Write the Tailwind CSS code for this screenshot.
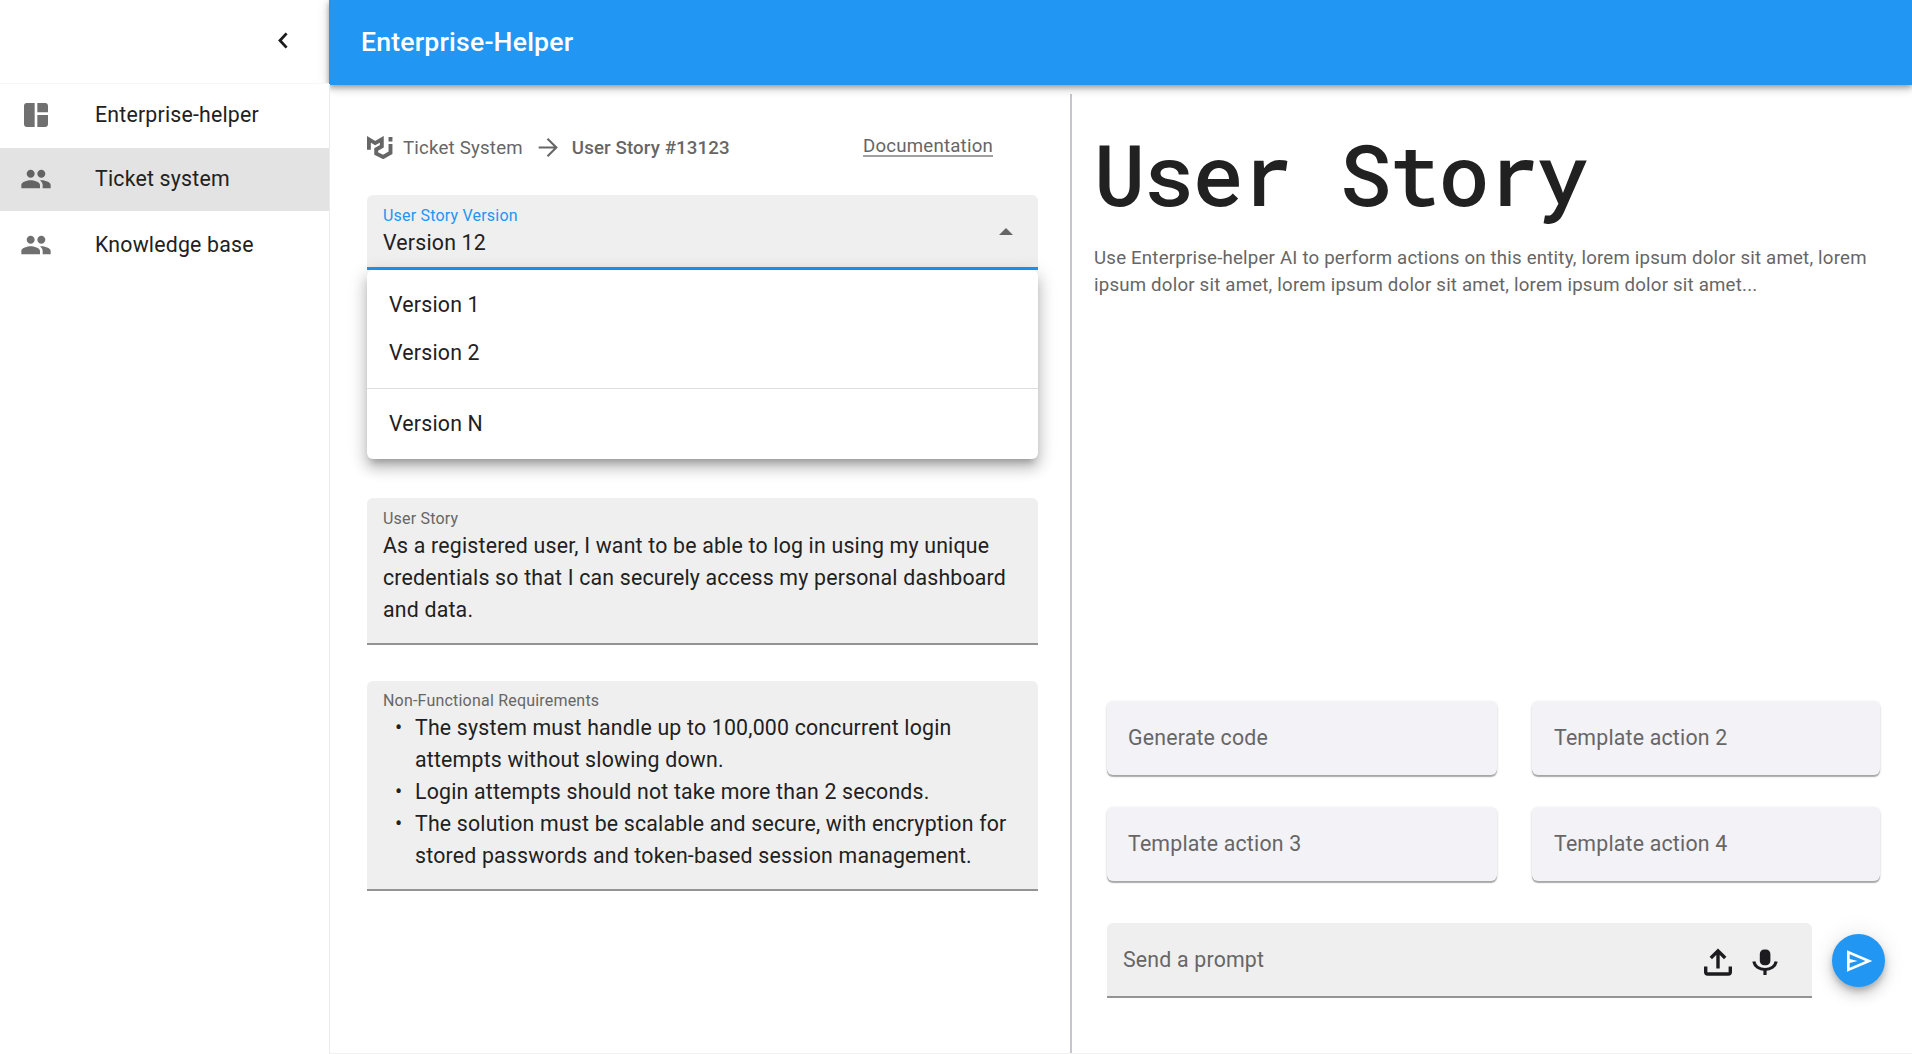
<!DOCTYPE html>
<html lang="en">
<head>
<meta charset="utf-8">
<title>Enterprise-Helper</title>
<script src="https://cdn.jsdelivr.net/npm/@tailwindcss/browser@4"></script>
</head>
<body class="flex h-[1054px] w-[1912px] overflow-hidden bg-white font-['Roboto',sans-serif] text-[21.3px] leading-8 tracking-[0.2px] text-[#212121]">
  <nav class="z-20 flex w-[329px] shrink-0 flex-col">
    <div class="flex h-[84px] shrink-0 items-center justify-end border-b border-[#f7f7f7] pr-[34px]">
      <svg class="mt-[-3px] size-6" viewBox="0 0 24 24" fill="none" stroke="#1c1c1c" stroke-width="2.8"><path d="M15.6 5.4 9 12.5l6.600 7.1"/></svg>
    </div>
    <div class="mr-[-1px] flex grow flex-col border-r border-[#ebebeb] bg-white">
      <a class="flex h-16 items-center pb-0.5 pl-5"><svg class="mr-[43px] size-8 fill-[#707070]" viewBox="0 0 24 24"><path d="M11 21H5c-1.100 0-2-.9-2-2V5c0-1.100.9-2 2-2h6v18zm2 0h6c1.100 0 2-.9 2-2v-7h-8v9zm8-11V5c0-1.100-.9-2-2-2h-6v7h8z"/></svg>Enterprise-helper</a>
      <a class="flex h-[63px] items-center bg-[#e3e3e3] pb-px pl-5"><svg class="mr-[43px] size-8 fill-[#636363]" viewBox="0 0 24 24"><path d="M16 11c1.660 0 2.990-1.340 2.990-3S17.660 5 16 5c-1.660 0-3 1.340-3 3s1.340 3 3 3zm-8 0c1.660 0 2.990-1.340 2.990-3S9.660 5 8 5C6.340 5 5 6.340 5 8s1.340 3 3 3zm0 2c-2.330 0-7 1.170-7 3.500V19h14v-2.500c0-2.330-4.670-3.500-7-3.500zm8 0c-.29 0-.62.02-.97.05 1.160.84 1.970 1.970 1.970 3.450V19h6v-2.500c0-2.330-4.670-3.500-7-3.500z"/></svg>Ticket system</a>
      <a class="mt-0.5 flex h-16 items-center pl-5"><svg class="mr-[43px] size-8 fill-[#707070]" viewBox="0 0 24 24"><path d="M16 11c1.660 0 2.990-1.340 2.990-3S17.660 5 16 5c-1.660 0-3 1.340-3 3s1.340 3 3 3zm-8 0c1.660 0 2.990-1.340 2.990-3S9.660 5 8 5C6.340 5 5 6.340 5 8s1.340 3 3 3zm0 2c-2.330 0-7 1.170-7 3.500V19h14v-2.500c0-2.330-4.670-3.500-7-3.500zm8 0c-.29 0-.62.02-.97.05 1.160.84 1.970 1.970 1.970 3.450V19h6v-2.500c0-2.330-4.670-3.500-7-3.500z"/></svg>Knowledge base</a>
    </div>
  </nav>

  <div class="flex grow flex-col">
    <header class="z-10 flex h-[85px] shrink-0 items-center bg-[#2196f3] pb-px pl-8 text-[26.6px] font-medium text-white shadow-[0_2px_5px_rgba(0,0,0,0.25),0_5px_7px_rgba(0,0,0,0.12),0_1px_13px_rgba(0,0,0,0.12)]">Enterprise-Helper</header>
    <div class="flex grow border-b border-[#f1f1f1]">
      <main class="mt-[9px] w-[743px] shrink-0 border-r-2 border-[#c7c6cc] pl-[38px]">
        <div class="flex h-[101px] items-center pt-1.5 text-[18.67px] text-[#666]">
          <svg class="mr-2.5 h-[23px] w-[26px]" viewBox="0 0 26 23" fill="none" stroke="#666" stroke-width="3.900"><path d="M1.900 13.800V3.400L8.200 7.100 14.800 3.300V10.300L9.200 13.500V17.600L16.200 21 23.500 16.800V8M23.500 0.900V5.600"/></svg>
          <span>Ticket System</span>
          <svg class="ml-3 mr-3 size-[25px]" viewBox="0 0 24 24" fill="none" stroke="#666" stroke-width="2"><path d="M3.500 12h16M12 3.500l8.500 8.500-8.500 8.500"/></svg>
          <span class="font-medium tracking-[0.13px]">User Story #13123</span>
          <a class="ml-auto mr-[77px] mt-[-3px] underline decoration-[#a0a0a0] decoration-2 underline-offset-[3px]">Documentation</a>
        </div>
        <div class="relative w-[671px]">
          <div class="flex h-[75px] items-center justify-between rounded-t-md border-b-3 border-[#2196f3] bg-[#efefef] pl-4 pr-[25px]">
            <div class="flex flex-col pt-0.5">
              <label class="text-base leading-[22px] text-[#2196f3]">User Story Version</label>
              <span>Version 12</span>
            </div>
            <svg class="h-[7px] w-3.5 fill-[#666]" viewBox="0 0 14 7"><path d="M0 7 7 0l7 7z"/></svg>
          </div>
          <ul class="absolute left-0 top-[75px] w-full rounded-md bg-white shadow-[0_7px_7px_-4px_rgba(0,0,0,0.22),0_9px_14px_1px_rgba(0,0,0,0.16),0_4px_18px_3px_rgba(0,0,0,0.12)]">
            <li class="mt-[11px] flex h-12 items-center pl-[22px]">Version 1</li>
            <li class="flex h-12 items-center pl-[22px]">Version 2</li>
            <li class="mt-[11px] border-t border-[#dedede] pb-[11px] pt-[11px] pl-[22px]"><span class="flex h-12 items-center">Version N</span></li>
          </ul>
        </div>
        <section class="mt-[228px] h-[147px] w-[671px] rounded-t-md border-b-2 border-[#949494] bg-[#efefef] px-4 pt-2.5">
          <h2 class="text-base leading-[22px] text-[#666]">User Story</h2>
          <p>As a registered user, I want to be able to log in using my unique<br>credentials so that I can securely access my personal dashboard<br>and data.</p>
        </section>
        <section class="mt-9 h-[210px] w-[671px] rounded-t-md border-b-2 border-[#949494] bg-[#efefef] px-4 pt-[9px]">
          <h2 class="text-base leading-[22px] text-[#666]">Non-Functional Requirements</h2>
          <ul>
            <li class="flex"><span class="w-8 pl-3">•</span><span>The system must handle up to 100,000 concurrent login<br>attempts without slowing down.</span></li>
            <li class="flex"><span class="w-8 pl-3">•</span><span>Login attempts should not take more than 2 seconds.</span></li>
            <li class="flex"><span class="w-8 pl-3">•</span><span>The solution must be scalable and secure, with encryption for<br>stored passwords and token-based session management.</span></li>
          </ul>
        </section>
      </main>
      <aside class="flex grow flex-col pl-[22px]">
        <h1 class="mt-[34px] h-[108px] whitespace-nowrap font-['Roboto_Mono','DejaVu_Sans_Mono',monospace] text-[85.33px] font-medium leading-[108px] tracking-[-2px]">User Story</h1>
        <p class="mt-[18px] text-[18.67px] leading-[26.67px] text-[#666]">Use Enterprise-helper AI to perform actions on this entity, lorem ipsum dolor sit amet, lorem<br>ipsum dolor sit amet, lorem ipsum dolor sit amet, lorem ipsum dolor sit amet...</p>
        <div class="ml-[13px] mt-auto grid grid-cols-[390px_348px] gap-x-[35px] gap-y-8 text-[#666]">
          <button class="flex h-[74px] items-center rounded-md bg-[#f3f2f7] pl-[21px] shadow-[0_2px_1px_rgba(0,0,0,0.28),0_1px_3px_rgba(0,0,0,0.15)]">Generate code</button>
          <button class="flex h-[74px] items-center rounded-md bg-[#f3f2f7] pl-[22px] shadow-[0_2px_1px_rgba(0,0,0,0.28),0_1px_3px_rgba(0,0,0,0.15)]">Template action 2</button>
          <button class="flex h-[74px] items-center rounded-md bg-[#f3f2f7] pl-[21px] shadow-[0_2px_1px_rgba(0,0,0,0.28),0_1px_3px_rgba(0,0,0,0.15)]">Template action 3</button>
          <button class="flex h-[74px] items-center rounded-md bg-[#f3f2f7] pl-[22px] shadow-[0_2px_1px_rgba(0,0,0,0.28),0_1px_3px_rgba(0,0,0,0.15)]">Template action 4</button>
        </div>
        <div class="mb-[55px] ml-[13px] mt-[42px] flex items-center">
          <div class="flex h-[75px] w-[705px] items-center rounded-t-md border-b-2 border-[#949494] bg-[#efefef] pl-4 text-[#666]">
            <span class="grow pt-px">Send a prompt</span>
            <svg class="mr-5 mt-[5px] h-7 w-7" viewBox="0 0 28 28" fill="none" stroke="#1c1b1f" stroke-width="3.400"><path d="M14 20.500V3M6.800 10 14 2.800l7.200 7.200"/><path d="M1.700 18.500v5.500q0 2 2 2h20.600q2 0 2-2v-5.500"/></svg>
            <svg class="mr-[34px] mt-[5px] h-7 w-[26px]" viewBox="0 0 26 28" fill="none" stroke="#1c1b1f" stroke-width="3.200"><rect x="7.800" y="1.500" width="10.600" height="15.800" rx="4.500" fill="#1c1b1f" stroke="none"/><path d="M1.800 13.500c1 4.800 5.500 8 11.200 8s10.200-3.200 11.200-8M13 21v6"/></svg>
          </div>
          <button class="ml-5 flex size-[53px] items-center justify-center rounded-full bg-[#2196f3] shadow-[0_4px_6px_-1px_rgba(0,0,0,0.22),0_8px_13px_rgba(0,0,0,0.15),0_1px_24px_rgba(0,0,0,0.1)]">
            <svg class="size-8 fill-white" viewBox="0 0 24 24"><path d="M3 20V4L22 12L3 20ZM5 17L16.850 12L5 7V10.500L11 12L5 13.500V17Z"/></svg>
          </button>
        </div>
      </aside>
    </div>
  </div>
</body>
</html>
